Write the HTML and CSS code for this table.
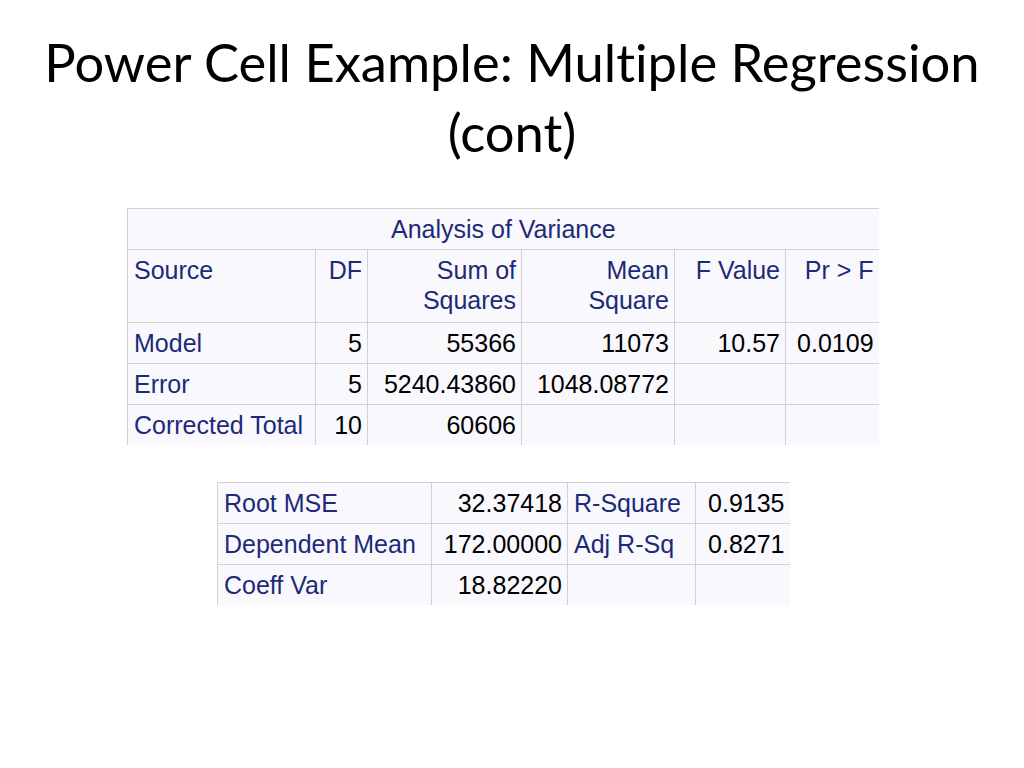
FILE: index.html
```html
<!DOCTYPE html>
<html>
<head>
<meta charset="utf-8">
<link rel="stylesheet" href="styles.css">
</head>
<body>
<div class="slide">
  <h1 class="title">Power Cell Example: Multiple Regression<br>(cont)</h1>
  <table class="sas anova">
    <colgroup>
      <col style="width:188px"><col style="width:52px"><col style="width:154px"><col style="width:153px"><col style="width:111px"><col style="width:93px">
    </colgroup>
    <tr><th colspan="6" class="caption">Analysis of Variance</th></tr>
    <tr class="head">
      <th class="l">Source</th><th class="r">DF</th><th class="r">Sum of<br>Squares</th><th class="r">Mean<br>Square</th><th class="r">F Value</th><th class="r">Pr &gt; F</th>
    </tr>
    <tr><th class="l">Model</th><td>5</td><td>55366</td><td>11073</td><td>10.57</td><td>0.0109</td></tr>
    <tr><th class="l">Error</th><td>5</td><td>5240.43860</td><td>1048.08772</td><td></td><td></td></tr>
    <tr><th class="l">Corrected Total</th><td>10</td><td>60606</td><td></td><td></td><td></td></tr>
  </table>
  <table class="sas fit">
    <colgroup>
      <col style="width:214px"><col style="width:136px"><col style="width:128px"><col style="width:94px">
    </colgroup>
    <tr><th class="l">Root MSE</th><td>32.37418</td><th class="l">R-Square</th><td>0.9135</td></tr>
    <tr><th class="l">Dependent Mean</th><td>172.00000</td><th class="l">Adj R-Sq</th><td>0.8271</td></tr>
    <tr><th class="l">Coeff Var</th><td>18.82220</td><th class="l"></th><td></td></tr>
  </table>
</div>
</body>
</html>
```
FILE: styles.css
```css
html, body {
  margin: 0;
  padding: 0;
  background: #ffffff;
}
.slide {
  width: 1024px;
  height: 768px;
  overflow: hidden;
  display: flex;
  flex-direction: column;
}
.title {
  margin: 27px 0 0 0;
  font-family: "Lato", "Open Sans", sans-serif;
  font-weight: normal;
  font-size: 52.5px;
  line-height: 70px;
  text-align: center;
  color: #000000;
  font-variant-ligatures: none;
}
.sas {
  border-collapse: collapse;
  table-layout: fixed;
  background: #f9f9fd;
  font-family: "Liberation Sans", Arial, sans-serif;
  font-size: 25px;
  line-height: 30px;
}
.sas th, .sas td {
  border-left: 1px solid #cfd0d8;
  border-top: 1px solid #cfd0d8;
  padding: 5px 6px 5px 6px;
  height: 30px;
  font-weight: normal;
  vertical-align: top;
  white-space: nowrap;
  overflow: hidden;
}
.sas th {
  color: #1d2a78;
}
.sas td {
  color: #000000;
  text-align: right;
  padding-right: 5px;
}
.sas th.l { text-align: left; }
.sas th.r { text-align: right; padding-right: 5px; }
.sas th.caption { text-align: center; }
.sas tr.head th { height: 62px; }
.anova {
  margin: 41px 0 0 127px;
  width: 751px;
}
.fit {
  margin: 37px 0 0 217px;
  width: 572px;
}
```
